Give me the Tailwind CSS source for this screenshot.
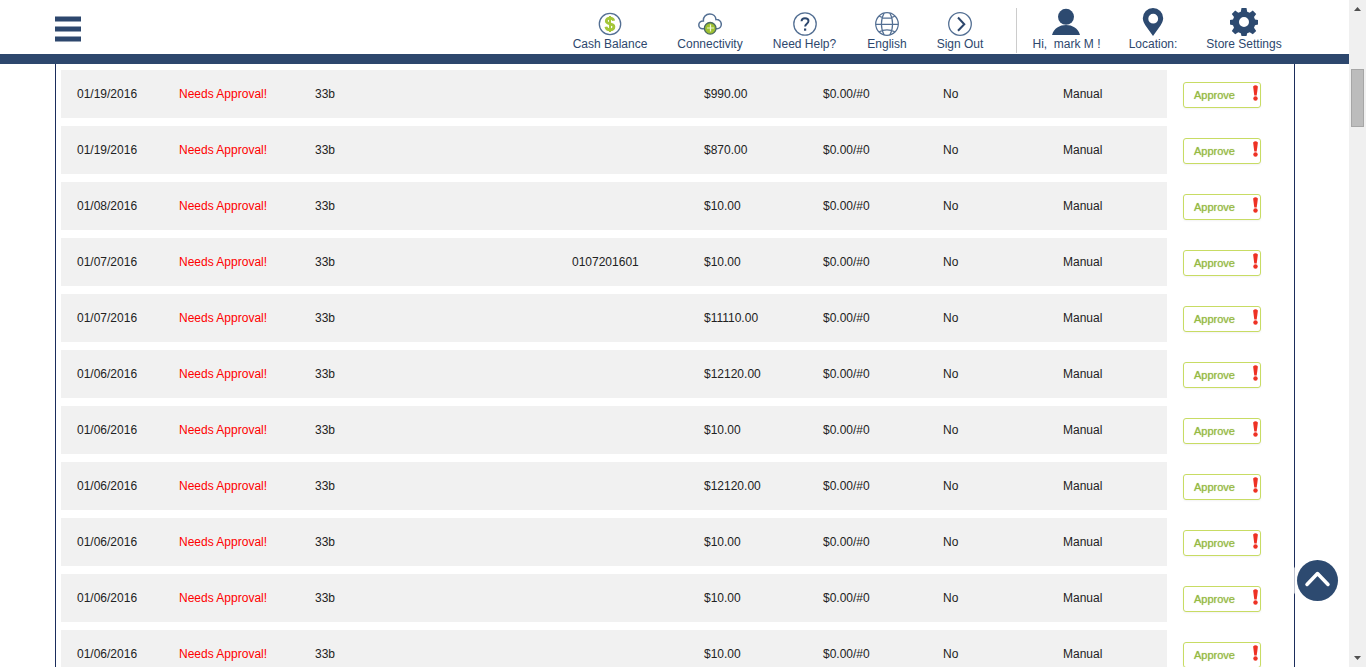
<!DOCTYPE html>
<html lang="en">
<head>
<meta charset="utf-8">
<meta name="viewport" content="width=device-width, initial-scale=1">
<title>Deposits</title>
<script src="https://cdn.jsdelivr.net/npm/@tailwindcss/browser@4"></script>
</head>
<body class="flex h-screen overflow-hidden bg-white font-['Liberation_Sans',Arial,sans-serif] text-xs text-[#222222]">
<div class="flex min-w-0 flex-1 flex-col overflow-hidden">
  <header class="flex h-16 shrink-0 items-start justify-between border-b-10 border-[#2d476d] bg-white pl-[55px] pr-[67px] text-[#2d476d]">
    <button type="button" aria-label="Menu" class="mt-4">
      <svg class="block h-[26px] w-[26px]" viewBox="0 0 26 26" fill="#2d476d"><path d="M0 .4h26v5H0zM0 10.4h26v5H0zM0 20.4h26v5H0z"/></svg>
    </button>
    <nav class="flex pt-2 whitespace-nowrap">
      <a href="#" class="mr-7 flex w-[78px] flex-col items-center">
        <svg class="mt-1 block size-6" viewBox="0 0 24 24"><circle cx="12" cy="12" r="10.7" fill="none" stroke="#536f93" stroke-width="1.3"/><path d="M15.7 8.8C15.3 7 14 6.2 12 6.2c-2.200 0-3.700 1.100-3.700 2.900 0 4 7.600 1.700 7.600 5.700 0 1.900-1.600 3-3.900 3-2.300 0-3.800-1-4.100-3" fill="none" stroke="#a4c639" stroke-width="2.800"/><path d="M12 4v16" stroke="#a4c639" stroke-width="2"/></svg>
        <span class="leading-4">Cash Balance</span>
      </a>
      <a href="#" class="mr-7 flex w-[66px] flex-col items-center">
        <svg class="mt-1 block size-6" viewBox="0 0 24 24"><path d="M7 16.800H4.500A3.800 3.800 0 0 1 .8 13c0-2.500 2-4.300 4.600-4.100C5 5 7.900 1.900 11.800 1.900c3.400 0 6 2.300 6.200 5.700 3-.2 5.300 1.800 5.300 4.700 0 2.700-1.900 4.500-4.300 4.500h-1.500" fill="none" stroke="#536f93" stroke-width="1.500"/><circle cx="12.200" cy="16.300" r="5.800" fill="#9fc131" stroke="#4b6a60" stroke-width="1.300"/><path d="M12.500 12.500v7M9 16h7" stroke="#eef7d5" stroke-width="1.200"/></svg>
        <span class="leading-4">Connectivity</span>
      </a>
      <a href="#" class="mr-7 flex w-[67px] flex-col items-center">
        <svg class="mt-1 block size-6" viewBox="0 0 24 24" fill="none"><circle cx="12" cy="12" r="11.200" stroke="#536f93" stroke-width="1.300"/><path d="M8.500 9.200C8.600 7.200 9.900 6.200 12 6.200c2 0 3.500 1.100 3.500 2.800 0 2.600-3.400 2.800-3.400 5.600" stroke="#2d476d" stroke-width="1.900"/><path d="M11 16.500h2.200v2.200H11z" fill="#2d476d"/></svg>
        <span class="leading-4">Need Help?</span>
      </a>
      <a href="#" class="mr-7 flex w-[42px] flex-col items-center">
        <svg class="mt-1 block size-6" viewBox="0 0 24 24" fill="none" stroke="#536f93" stroke-width="1.200"><circle cx="12" cy="12" r="11.300"/><path d="M9.200 1C5.500 7 5.500 17 9.200 23M14.800 1c3.700 6 3.700 16 0 22M.7 12.300h22.600M4.200 4.200c4.500 2.500 11.100 2.500 15.600 0M4.200 19.800c4.500-2.500 11.100-2.500 15.600 0"/></svg>
        <span class="leading-4">English</span>
      </a>
      <a href="#" class="mr-8 flex w-[48px] flex-col items-center">
        <svg class="mt-1 block size-6" viewBox="0 0 24 24" fill="none"><circle cx="12" cy="12" r="11.300" stroke="#536f93" stroke-width="1.300"/><path d="m10 5.500 6.300 6.700L10 18.800" stroke="#2d476d" stroke-width="2"/></svg>
        <span class="leading-4">Sign Out</span>
      </a>
      <div class="h-[45px] w-px bg-[#cccccc]"></div>
      <a href="#" class="mr-7 ml-4 flex w-[67px] flex-col items-center">
        <svg class="mr-[2px] block h-7 w-7" viewBox="0 0 28 28" fill="#2d4a70"><circle cx="14" cy="8.800" r="8"/><path d="M0 27c2-6.600 7.500-9.900 14-9.900S26 20.400 28 27z"/></svg>
        <span class="leading-4 whitespace-pre">Hi,  mark M !</span>
      </a>
      <a href="#" class="mr-7 flex w-[50px] flex-col items-center">
        <svg class="block h-7 w-7" viewBox="0 0 28 28"><path fill="#2d4a70" fill-rule="evenodd" d="M14 0a10.200 10.200 0 0 0-10.200 10.300c0 2.500 1.300 5 2.700 7.200L14 28l7.500-10.500c1.400-2.200 2.700-4.700 2.700-7.200A10.200 10.200 0 0 0 14 0zm.2 5.800a4.900 4.900 0 1 1 0 9.800 4.900 4.900 0 0 1 0-9.800z"/></svg>
        <span class="leading-4">Location:</span>
      </a>
      <a href="#" class="flex w-[76px] flex-col items-center">
        <svg class="block h-7 w-7" viewBox="0 0 28 28"><path fill="#2d4a70" fill-rule="evenodd" d="M11.500 0h5l.7 3.700 2.500 1 3.100-2.200 3.400 3.500-2.200 3 1 2.500 3 .5v4.600l-3 .7-1 2.500 2.200 3.100-3.400 3.400-3.100-2.100-2.500 1-.7 2.800h-5l-.7-2.800-2.500-1-3.100 2.100-3.400-3.400 2.200-3.100-1-2.500-3-.7V12l3-.5 1-2.500-2.200-3 3.400-3.500 3.100 2.200 2.500-1zM14 9a5 5 0 1 0 0 10 5 5 0 0 0 0-10z"/></svg>
        <span class="leading-4">Store Settings</span>
      </a>
    </nav>
  </header>

  <main class="mr-[54px] ml-[55px] min-h-0 flex-1 overflow-hidden border-x border-[#1b2d5c] pt-[6px] pl-[5px]">
    <table class="w-full table-fixed border-separate border-spacing-0 text-left">
      <colgroup>
        <col class="w-[102px]"><col class="w-[136px]"><col class="w-[257px]"><col class="w-[132px]"><col class="w-[119px]"><col class="w-[120px]"><col class="w-[120px]"><col class="w-[120px]"><col class="w-[127px]">
      </colgroup>
      <tbody id="rows"></tbody>
    </table>
  </main>
</div>

<div class="flex w-[17px] shrink-0 flex-col items-center bg-[#f0f0f0]" aria-hidden="true">
  <svg class="block h-[17px] w-[17px]" viewBox="0 0 17 17"><path d="M5 11l3.500-4 3.500 4z" fill="#505050"/></svg>
  <div class="flex w-full flex-1 justify-center pt-[52px]"><div class="h-[58px] w-[13px] border border-[#a6a6a6] bg-[#bcbcbc]"></div></div>
  <svg class="block h-[17px] w-[17px]" viewBox="0 0 17 17"><path d="M5 6l3.500 4L12 6z" fill="#505050"/></svg>
</div>

<button type="button" aria-label="Back to top" class="fixed right-7 bottom-[66px] size-[41px] rounded-full bg-[#2d4a70] ring-6 ring-white/70">
  <svg class="block size-[41px]" viewBox="0 0 41 41"><path d="M10 24.500l10.500-11 10.500 11" fill="none" stroke="#fff" stroke-width="3.500" stroke-linecap="round" stroke-linejoin="round"/></svg>
</button>

<template id="row">
  <tr class="h-14">
    <td class="border-b-8 border-white bg-[#f1f1f1] pl-4"></td>
    <td class="border-b-8 border-white bg-[#f1f1f1] pl-4 text-[#ff0000]">Needs Approval!</td>
    <td class="border-b-8 border-white bg-[#f1f1f1] pl-4">33b</td>
    <td class="border-b-8 border-white bg-[#f1f1f1] pl-4"></td>
    <td class="border-b-8 border-white bg-[#f1f1f1] pl-4"></td>
    <td class="border-b-8 border-white bg-[#f1f1f1] pl-4">$0.00/#0</td>
    <td class="border-b-8 border-white bg-[#f1f1f1] pl-4">No</td>
    <td class="border-b-8 border-white bg-[#f1f1f1] pl-4">Manual</td>
    <td class="border-b-8 border-white pt-[2px] pl-4">
      <button type="button" class="flex h-[26px] w-[78px] items-center justify-between rounded-[3px] border border-[#c8dc64] bg-white pl-[10px] pr-[2px] text-[11px] text-[#97bb3c] shadow-xs text-shadow-[0_0_1px_#a9bf80]">
        Approve
        <svg class="mb-[4px] block h-4 w-[5px]" viewBox="0 0 5 16" fill="#ee3124"><path d="M.1 1.500Q2.500-.9 4.900 1.500L3.700 10.500H1.300z"/><circle cx="2.500" cy="13.500" r="2.200"/></svg>
      </button>
    </td>
  </tr>
</template>
<script>
  const entries = [
    ["01/19/2016", "", "$990.00"],
    ["01/19/2016", "", "$870.00"],
    ["01/08/2016", "", "$10.00"],
    ["01/07/2016", "0107201601", "$10.00"],
    ["01/07/2016", "", "$11110.00"],
    ["01/06/2016", "", "$12120.00"],
    ["01/06/2016", "", "$10.00"],
    ["01/06/2016", "", "$12120.00"],
    ["01/06/2016", "", "$10.00"],
    ["01/06/2016", "", "$10.00"],
    ["01/06/2016", "", "$10.00"]
  ];
  const body = document.getElementById("rows");
  const template = document.getElementById("row");
  for (const [date, number, amount] of entries) {
    const row = template.content.cloneNode(true);
    const cells = row.querySelectorAll("td");
    cells[0].textContent = date;
    cells[3].textContent = number;
    cells[4].textContent = amount;
    body.append(row);
  }
</script>
</body>
</html>
